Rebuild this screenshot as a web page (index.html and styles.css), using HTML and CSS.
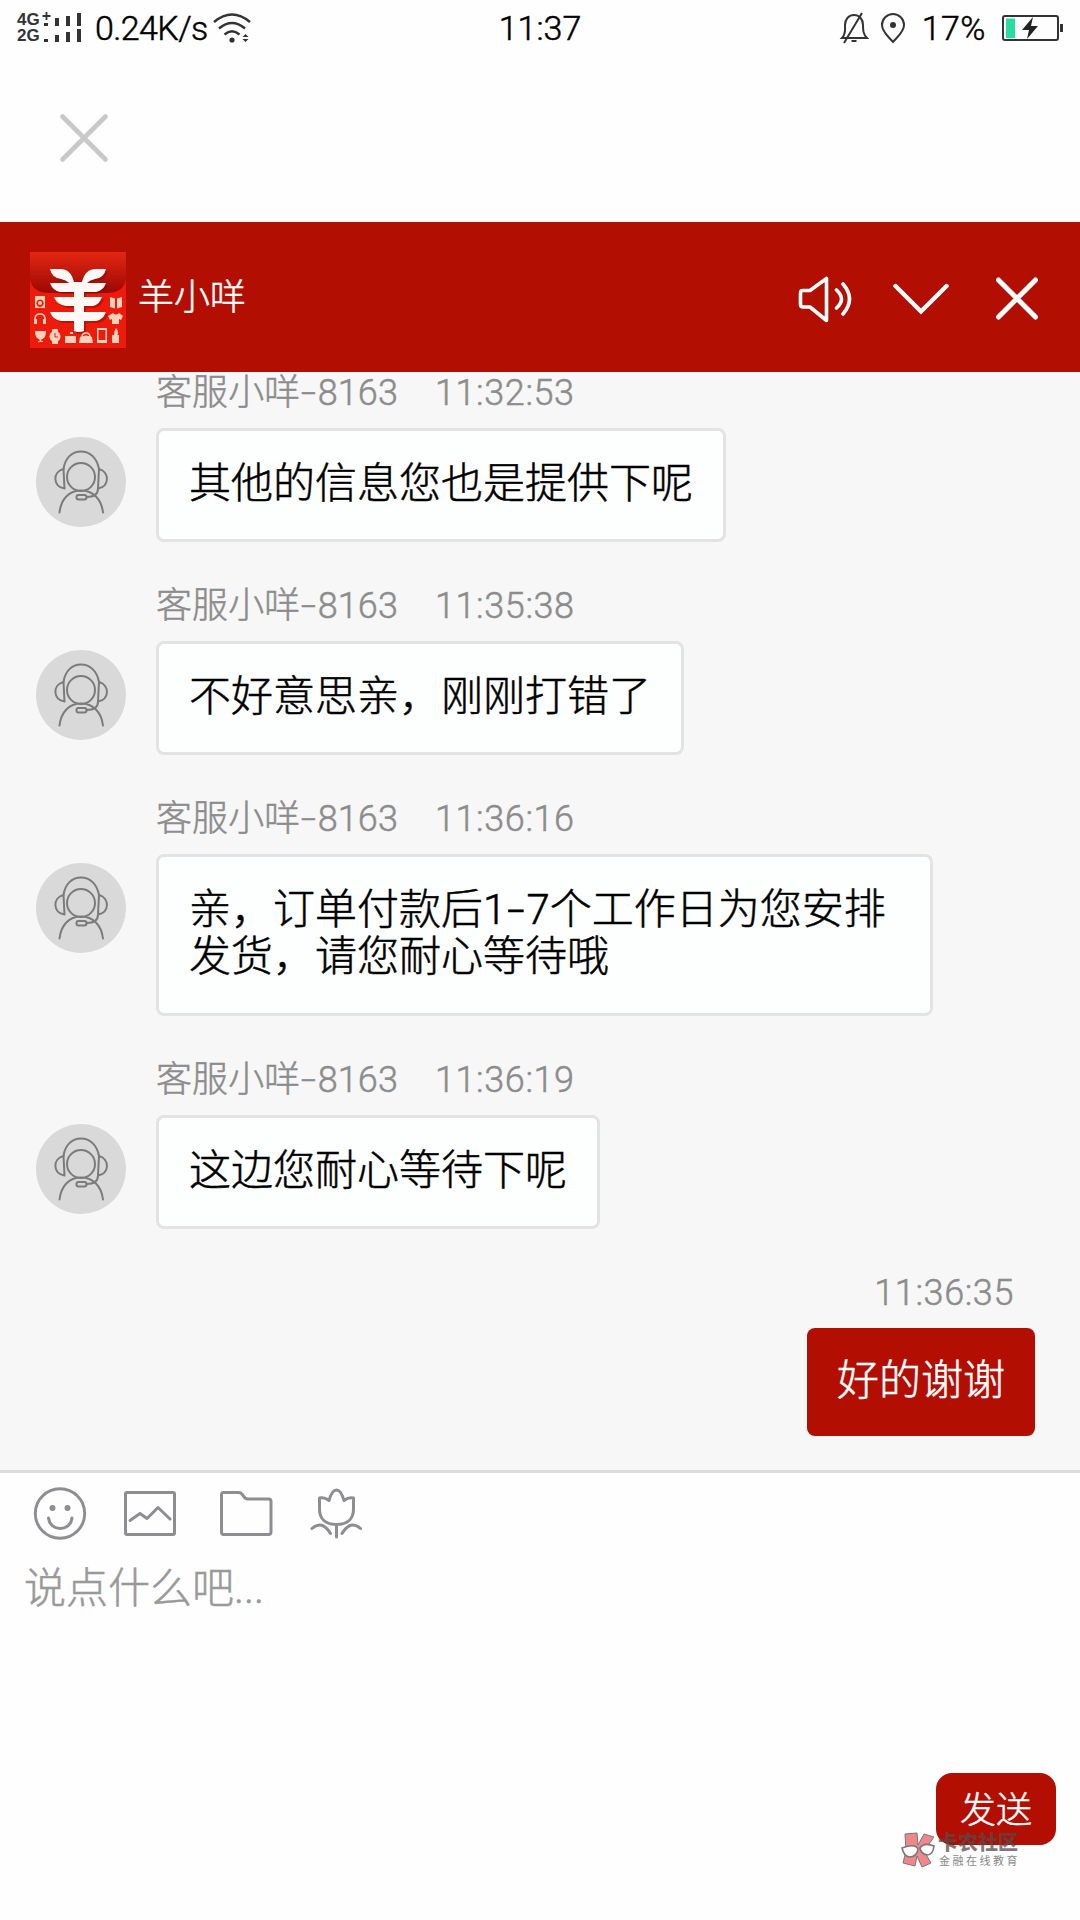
FILE: index.html
```html
<!DOCTYPE html>
<html lang="zh-CN">
<head>
<meta charset="utf-8">
<title>羊小咩</title>
<link rel="stylesheet" href="styles.css">
</head>
<body>
<svg class="defs" aria-hidden="true">
  <symbol id="agent" viewBox="0 0 90 90">
    <g fill="none" stroke="#7b7b7b" stroke-width="2" stroke-linecap="round" stroke-linejoin="round">
      <circle cx="45" cy="40" r="14"/>
      <path d="M27.500 32C29 21 36 14.500 45 14.500S61 21 63 32"/>
      <path d="M27.500 32C16 35 17 50 28.500 51.500zM63 32C74 35 73.500 50 62 51.500z"/>
      <path d="M23.500 75.500C25 62 33 53.500 45 53.500S65.500 62 67 75.500"/>
      <path d="M62 51.500C62 57 59 60 50.500 60"/>
      <rect x="40.500" y="58" width="10" height="4.500" rx="2"/>
    </g>
  </symbol>
</svg>
<div class="screen">
  <header class="status">
    <div class="status-left">
      <div class="nets"><span>4G</span><span>2G</span></div>
      <svg class="bars" width="38" height="32" viewBox="0 0 38 32"><path d="M4.500 0v8M.5 4h8" stroke="#333" stroke-width="1.800"/><g fill="#333"><path d="M2 11h4v3H2zM13 6h4v8h-4zM24 4h4v10h-4zM35 1h4v13h-4zM2 27h4v3H2zM13 23h4v7h-4zM24 20h4v10h-4zM35 17h4v13h-4z"/></g></svg>
      <span class="rate">0.24K/s</span>
      <svg class="wifi" width="38" height="32" viewBox="0 0 38 32"><g fill="none" stroke="#333" stroke-width="2.500"><path d="M1 10Q19-5 37 10M6 16.500Q19 5.500 32 16.500M11.500 22.500Q19 16 26.500 22.500"/></g><circle cx="19" cy="28" r="2.600" fill="#333"/><path d="M29.500 25l3-3 3 3zM29.500 27l3 3 3-3z" fill="#333"/></svg>
    </div>
    <div class="clock">11:37</div>
    <div class="status-right">
      <svg width="30" height="32" viewBox="0 0 30 32" fill="none" stroke="#333" stroke-width="2"><path d="M3 26C7 22 6 18 6 13C6 7 10 3 15 3S24 7 24 13C24 18 24 22 28 26zM12.500 29h5M5 31L23 1"/></svg>
      <svg width="26" height="32" viewBox="0 0 26 32"><path d="M13 30C9 25 2 20 2 13A11 11 0 0 1 24 13C24 20 17 25 13 30z" fill="none" stroke="#333" stroke-width="2"/><circle cx="13" cy="13" r="3" fill="#333"/></svg>
      <span class="percent">17%</span>
      <svg width="61" height="28" viewBox="0 0 61 28"><rect x="1" y="2" width="55" height="24" rx="2" fill="none" stroke="#333" stroke-width="2"/><path d="M58 10h3v8h-3z" fill="#333"/><path d="M4 4.500h9v19.500H4z" fill="#27dda0"/><path d="M31 3L20 16h7l-2 9 11-13h-7z" fill="#222"/></svg>
    </div>
  </header>
  <nav class="topbar">
    <svg width="50" height="50" viewBox="0 0 50 50" stroke="#c8c8c8" stroke-width="4.600" stroke-linecap="round"><path d="M3.500 3.500l43 43M46.500 3.500l-43 43"/></svg>
  </nav>
  <div class="titlebar">
    <svg class="logo" width="96" height="96" viewBox="0 0 96 96">
      <defs><linearGradient id="flap" x2="0" y2="1"><stop stop-color="#e32713"/><stop offset="1" stop-color="#9b0803"/></linearGradient></defs>
      <rect width="96" height="96" fill="#ed1b0b"/>
      <path d="M0 0h96v27Q94 41 76 41H20Q2 41 0 27z" fill="url(#flap)"/>
      <path fill="#780a04" opacity=".45" transform="translate(2 2)" d="M20 17h10q11 0 14 13h8q3-13 14-13h10q-2 9-11 10-5 1-8 4h19q-3 8-10 9H54v5h18q-3 8-9 9h-9v6h22q-3 8-10 9H54v10q-5 2-10 0V69H31q-8-1-11-9h24v-6h-8q-9-1-12-9h20v-5H30q-7-1-10-9h19q-3-3-8-4-9-1-11-10z"/>
      <path fill="#fff8f4" d="M20 17h10q11 0 14 13h8q3-13 14-13h10q-2 9-11 10-5 1-8 4h19q-3 8-10 9H54v5h18q-3 8-9 9h-9v6h22q-3 8-10 9H54v10q-5 2-10 0V69H31q-8-1-11-9h24v-6h-8q-9-1-12-9h20v-5H30q-7-1-10-9h19q-3-3-8-4-9-1-11-10z"/>
      <g fill="#ffd1ba">
        <path fill-rule="evenodd" d="M5 44h10v12H5zM10 47.500a3.700 3.700 0 1 0 .1 0z"/><circle cx="10" cy="51" r="2"/>
        <path d="M80 45l5 1.500v10L80 55zM92 45l-5 1.500v10l5-1.500z"/>
        <path d="M83 61q3 3 6 0l4 3-2 4-2-1v5h-7v-5l-2 1-2-4z"/>
        <path d="M4 67h3v5H4zM13 67h3v5h-3z"/>
        <path d="M5 79h11q0 7-4 8l-1 2h2v1H8v-1h2l-1-2q-4-1-4-8z"/>
        <path d="M22 77h6v3h-6zM22 89h6v3h-6z"/><circle cx="25" cy="84.500" r="5.500"/>
        <path d="M35 84h11v7H35zM37 82h6v-2h-3v2zM50 85q6-3 12 0l1 6H49z"/>
        <path fill-rule="evenodd" d="M67 76h10v15H67zM68.500 78v10h7V78z"/>
        <path d="M86 76q3 3 1.500 7h1.500v8h-7v-8h2q0-4 2-7z"/>
      </g>
      <g fill="none" stroke="#ffd1ba" stroke-width="1.500"><path d="M5 68v-1q0-5 5-5t5 5v1M52 85q0-4 4-4t4 4"/></g><path d="M25 81v4h3" fill="none" stroke="#ed1b0b"/>
    </svg>
    <h1 class="title">羊小咩</h1>
    <div class="actions">
      <svg width="54" height="48" viewBox="0 0 54 48" fill="none" stroke="#fff" stroke-width="3.600" stroke-linecap="round" stroke-linejoin="round"><path d="M2.500 18Q2.500 15.500 5 15.500h7L28.500 3.500v42L12 32H5q-2.500 0-2.500-2.500zM38.500 15q10 9 0 18M45 9q13 15 0 30"/></svg>
      <svg width="56" height="48" viewBox="0 0 56 48" fill="none" stroke="#fff" stroke-width="4.400" stroke-linecap="round"><path d="M2.500 11L28 36.500 53.500 11"/></svg>
      <svg class="close" width="44" height="48" viewBox="0 0 44 48" stroke="#fff" stroke-width="5" stroke-linecap="round"><path d="M3.500 5l37 37M40.500 5l-37 37"/></svg>
    </div>
  </div>
  <main class="chat">
    <article class="msg">
      <svg class="avatar"><use href="#agent"/></svg>
      <div><div class="meta"><span>客服小咩<i class="dash">-</i>8163</span><time>11:32:53</time></div><p class="bubble">其他的信息您也是提供下呢</p></div>
    </article>
    <article class="msg">
      <svg class="avatar"><use href="#agent"/></svg>
      <div><div class="meta"><span>客服小咩<i class="dash">-</i>8163</span><time>11:35:38</time></div><p class="bubble">不好意思亲，刚刚打错了</p></div>
    </article>
    <article class="msg">
      <svg class="avatar"><use href="#agent"/></svg>
      <div><div class="meta"><span>客服小咩<i class="dash">-</i>8163</span><time>11:36:16</time></div><p class="bubble bubble-wide">亲，订单付款后1<i class="dash">-</i>7个工作日为您安排<br>发货，请您耐心等待哦</p></div>
    </article>
    <article class="msg">
      <svg class="avatar"><use href="#agent"/></svg>
      <div><div class="meta"><span>客服小咩<i class="dash">-</i>8163</span><time>11:36:19</time></div><p class="bubble">这边您耐心等待下呢</p></div>
    </article>
    <article class="msg-self">
      <time>11:36:35</time>
      <p class="bubble-self">好的谢谢</p>
    </article>
  </main>
  <footer class="composer">
    <div class="tools">
      <svg viewBox="33 1486 54 54"><circle cx="60" cy="1513.500" r="24.700"/><path d="M48.500 1518C50 1532 70.500 1532 72 1518"/><g class="eyes"><circle cx="52.500" cy="1508" r="3"/><circle cx="67.500" cy="1508" r="3"/></g></svg>
      <svg viewBox="123 1486 54 54"><rect x="125.500" y="1492.500" width="49" height="42" rx="1.500"/><path d="M130 1520.500l10-7 7 5 11-11 12 11.500"/></svg>
      <svg class="folder" viewBox="219 1486 54 54"><path d="M223.500 1492.500h15q3 0 4.500 3 2 3.500 5 3.500h20.500q2.500 0 2.500 2.500v30.500q0 2.500-2.500 2.500h-45q-2 0-2-2.500v-37q0-2.500 2-2.500z"/></svg>
      <svg viewBox="309 1486 54 54"><path d="M319.500 1498q5-1 9.500 2.500 3-10.500 7.500-10.500t7.500 10.500q4.500-3.500 9.500-2.500v11c0 10-6 15.500-17 15.500s-17-5.500-17-15.500zM336.500 1524.500v12.500M312 1528.500q10-9 18.500 5M360.500 1528.500q-10-9-18.500 5"/></svg>
    </div>
    <div class="input">说点什么吧...</div>
    <button class="send">发送</button>
  </footer>
  <div class="watermark">
    <svg width="36" height="38" viewBox="0 0 36 38"><g fill="#f0878b" stroke="#777" stroke-width="1"><path d="M5 2l12-1 1 12 6-11 10 3-10 14 7 12-9 4-5-11-2 10-12-3 3-12z"/></g><g fill="#fff" stroke="#777" stroke-width="1.600"><path d="M2 16q13-5 16 1-1 8-9 8-5-1-7-9zM20 16q4-6 14-2-1 9-7 9-6-1-7-7z"/></g></svg>
    <div class="wm-text"><strong>卡农社区</strong><span>金融在线教育</span></div>
  </div>
</div>
</body>
</html>
```
FILE: styles.css
```css
* { box-sizing: border-box; }
body {
  margin: 0;
  background: #fefefe;
  font-family: Roboto, "Noto Sans CJK SC", sans-serif;
  font-weight: 300;
  -webkit-text-stroke: 0.5px currentColor;
}
h1, p { margin: 0; font-weight: inherit; }
svg { display: block; flex: none; }
.defs { display: none; }
.screen {
  position: relative;
  width: 1080px;
  height: 1920px;
  display: flex;
  flex-direction: column;
  overflow: hidden;
}

.status {
  height: 56px;
  display: grid;
  grid-template-columns: 1fr auto 1fr;
  align-items: center;
  padding: 0 17px 0 17px;
  font-size: 34px;
  line-height: 56px;
  color: #000;
}
.status-left, .status-right { display: flex; align-items: center; }
.status-right { justify-content: flex-end; }
.nets {
  display: flex;
  flex-direction: column;
  width: 25px;
  font: 700 17px/16px "Liberation Sans", Arial, sans-serif;
  color: #333;
  -webkit-text-stroke: 0;
}
.bars { overflow: visible; }
.rate { width: 113px; margin-left: 15px; letter-spacing: -0.6px; }
.wifi { margin-left: 5px; }
.percent { margin: 0 16px 0 16px; letter-spacing: 0.500px; }
.status-right svg + svg { margin-left: 11px; }

.topbar { height: 166px; padding: 57px 59px; }

.titlebar {
  height: 150px;
  display: flex;
  align-items: center;
  padding: 5px 41px 0 30px;
  background: #b30e02;
  color: #fff;
}
.title { margin: -3px 0 0 12px; font-size: 36px; line-height: 48px; }
.actions { display: flex; gap: 41px; margin: -2px 0 0 auto; }
.actions .close { margin-left: 5px; }

.chat {
  height: 1098px;
  background: #f7f7f7;
  display: flex;
  flex-direction: column;
  gap: 43px;
  overflow: hidden;
}
.msg { display: flex; gap: 30px; padding-left: 36px; }
.avatar {
  width: 90px;
  height: 90px;
  margin-top: 65px;
  border-radius: 50%;
  background: #d9d9d9;
}
.meta {
  display: flex;
  gap: 37px;
  margin-bottom: 14px;
  font-size: 36px;
  line-height: 42px;
  color: #8c8c8c;
}
.meta span { letter-spacing: 0.100px; }
.meta time, .msg-self time { letter-spacing: 0.600px; }
.dash {
  display: inline-block;
  width: 0.480em;
  font-style: normal;
  text-align: center;
  transform: scaleX(1.500);
}
.bubble {
  width: fit-content;
  padding: 29px 30px 32px;
  border: 3px solid #e3e3e3;
  border-radius: 8px;
  background: #fdfefe;
  font-size: 42px;
  line-height: 47px;
  color: #000;
}
.bubble-wide { width: 777px; padding-bottom: 33px; white-space: nowrap; }
.msg-self {
  display: flex;
  flex-direction: column;
  align-items: flex-end;
  padding-right: 45px;
}
.msg-self time {
  margin: 0 21px 14px 0;
  font-size: 36px;
  line-height: 42px;
  color: #8c8c8c;
}
.bubble-self {
  padding: 29px 30px 32px;
  border-radius: 8px;
  background: #b30e02;
  font-size: 42px;
  line-height: 47px;
  color: #fff;
}

.composer {
  flex: 1;
  display: flex;
  flex-direction: column;
  border-top: 3px solid #dcdcdc;
  padding: 13px 24px 75px 33px;
}
.tools { display: flex; gap: 36px; }
.tools svg {
  width: 54px;
  height: 54px;
  fill: none;
  stroke: #8d8d92;
  stroke-width: 3;
  stroke-linecap: round;
  stroke-linejoin: round;
}
.tools .folder { margin-left: 6px; }
.tools .eyes { fill: #8d8d92; stroke: none; }
.input {
  flex: 1;
  margin: 24px 0 0 -9px;
  font-size: 42px;
  line-height: 50px;
  color: #999;
}
.send {
  align-self: flex-end;
  width: 120px;
  height: 72px;
  padding: 0 0 5px;
  border: 0;
  border-radius: 16px;
  background: #b30e02;
  font: inherit;
  font-size: 36px;
  color: #fff;
}

.watermark {
  position: absolute;
  left: 900px;
  top: 1832px;
  display: flex;
  gap: 2px;
  -webkit-text-stroke: 0;
}
.wm-text { display: flex; flex-direction: column; }
.wm-text strong {
  font-size: 20px;
  font-weight: 900;
  line-height: 23px;
  color: rgba(85, 75, 75, 0.75);
}
.wm-text span {
  margin-left: 1px;
  font-size: 11px;
  font-weight: 400;
  letter-spacing: 2.500px;
  line-height: 13px;
  color: #888;
}
```
